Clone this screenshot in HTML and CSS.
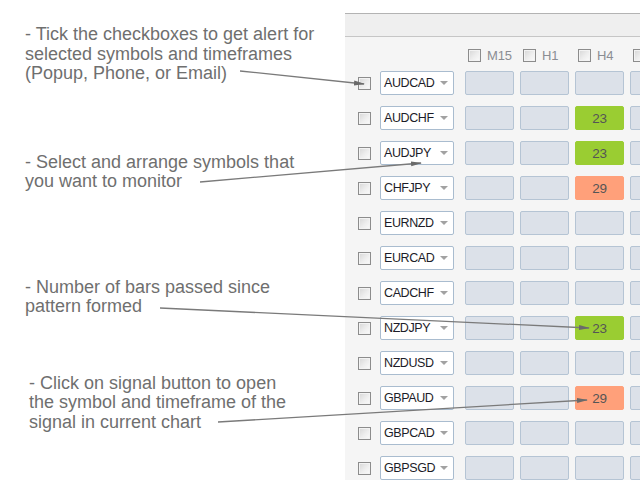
FILE: index.html
```html
<!DOCTYPE html>
<html lang="en">
<head>
<meta charset="utf-8">
<title>Pattern dashboard</title>
<link rel="stylesheet" href="styles.css">
</head>
<body>
<div class="page">
  <aside class="notes">
    <p class="note n1">- Tick the checkboxes to get alert for<br>selected symbols and timeframes<br>(Popup, Phone, or Email)</p>
    <p class="note n2">- Select and arrange symbols that<br>you want to monitor</p>
    <p class="note n3">- Number of bars passed since<br>pattern formed</p>
    <p class="note n4">- Click on signal button to open<br>the symbol and timeframe of the<br>signal in current chart</p>
  </aside>

  <section class="panel">
    <div class="panel-head"></div>
    <div class="panel-body">
      <div class="tf-row">
        <span class="tf"><span class="cb"></span>M15</span>
        <span class="tf"><span class="cb"></span>H1</span>
        <span class="tf"><span class="cb"></span>H4</span>
        <span class="tf"><span class="cb"></span></span>
      </div>

      <div class="row"><span class="cb"></span><span class="sym">AUDCAD<i class="caret"></i></span><span class="cells"><span class="cell"></span><span class="cell"></span><span class="cell"></span><span class="cell"></span></span></div>
      <div class="row"><span class="cb"></span><span class="sym">AUDCHF<i class="caret"></i></span><span class="cells"><span class="cell"></span><span class="cell"></span><span class="cell up">23</span><span class="cell"></span></span></div>
      <div class="row"><span class="cb"></span><span class="sym">AUDJPY<i class="caret"></i></span><span class="cells"><span class="cell"></span><span class="cell"></span><span class="cell up">23</span><span class="cell"></span></span></div>
      <div class="row"><span class="cb"></span><span class="sym">CHFJPY<i class="caret"></i></span><span class="cells"><span class="cell"></span><span class="cell"></span><span class="cell down">29</span><span class="cell"></span></span></div>
      <div class="row"><span class="cb"></span><span class="sym">EURNZD<i class="caret"></i></span><span class="cells"><span class="cell"></span><span class="cell"></span><span class="cell"></span><span class="cell"></span></span></div>
      <div class="row"><span class="cb"></span><span class="sym">EURCAD<i class="caret"></i></span><span class="cells"><span class="cell"></span><span class="cell"></span><span class="cell"></span><span class="cell"></span></span></div>
      <div class="row"><span class="cb"></span><span class="sym">CADCHF<i class="caret"></i></span><span class="cells"><span class="cell"></span><span class="cell"></span><span class="cell"></span><span class="cell"></span></span></div>
      <div class="row"><span class="cb"></span><span class="sym">NZDJPY<i class="caret"></i></span><span class="cells"><span class="cell"></span><span class="cell"></span><span class="cell up">23</span><span class="cell"></span></span></div>
      <div class="row"><span class="cb"></span><span class="sym">NZDUSD<i class="caret"></i></span><span class="cells"><span class="cell"></span><span class="cell"></span><span class="cell"></span><span class="cell"></span></span></div>
      <div class="row"><span class="cb"></span><span class="sym">GBPAUD<i class="caret"></i></span><span class="cells"><span class="cell"></span><span class="cell"></span><span class="cell down">29</span><span class="cell"></span></span></div>
      <div class="row"><span class="cb"></span><span class="sym">GBPCAD<i class="caret"></i></span><span class="cells"><span class="cell"></span><span class="cell"></span><span class="cell"></span><span class="cell"></span></span></div>
      <div class="row"><span class="cb"></span><span class="sym">GBPSGD<i class="caret"></i></span><span class="cells"><span class="cell"></span><span class="cell"></span><span class="cell"></span><span class="cell"></span></span></div>
    </div>
  </section>

  <svg class="arrows" width="640" height="480" viewBox="0 0 640 480" aria-hidden="true">
    <defs>
      <marker id="ah" markerWidth="11" markerHeight="6" refX="10" refY="3" orient="auto" markerUnits="userSpaceOnUse">
        <path d="M0,0.5 L11,3 L0,5.5 Z" fill="#6a6a6a"/>
      </marker>
    </defs>
    <g stroke="#7a7a7a" stroke-width="1.3" fill="none" marker-end="url(#ah)">
      <line x1="240" y1="71" x2="364" y2="84"/>
      <line x1="200" y1="182" x2="421" y2="163"/>
      <line x1="160" y1="308" x2="589" y2="328"/>
      <line x1="218" y1="422" x2="587" y2="400"/>
    </g>
  </svg>
</div>
</body>
</html>
```
FILE: styles.css
```css
* { box-sizing: border-box; }

html, body {
  margin: 0;
  padding: 0;
  background: #ffffff;
}

.page {
  position: relative;
  display: flex;
  width: 640px;
  height: 480px;
  overflow: hidden;
}

/* ---------- left annotations ---------- */
.notes {
  flex: none;
  width: 345px;
  display: flex;
  flex-direction: column;
}

.note {
  margin: 0;
  padding-left: 25px;
  font-family: "Liberation Sans", Arial, sans-serif;
  font-size: 18px;
  line-height: 19.5px;
  color: #6f6f6f;
  white-space: nowrap;
}

.n1 { margin-top: 25px; }
.n2 { margin-top: 69px; }
.n3 { margin-top: 86px; }
.n4 { margin-top: 57px; padding-left: 29px; }

/* ---------- panel ---------- */
.panel {
  flex: 1;
  min-width: 0;
  margin-top: 13px;
  border-top: 1px solid #b3b3b3;
  background: #f5f5f5;
  overflow: hidden;
}

.panel-head {
  height: 23px;
  background: #efefef;
  border-bottom: 1px solid #c6c6c6;
}

.panel-body {
  padding: 12px 0 0 13px;
  font-family: "Liberation Sans", Arial, sans-serif;
  width: 320px;
}

.tf-row {
  display: flex;
  align-items: center;
  height: 13px;
  margin-bottom: 9px;
  padding-left: 107px;
  white-space: nowrap;
}

.tf {
  flex: none;
  display: flex;
  align-items: center;
  width: 55px;
  padding-left: 3px;
  color: #8b8d93;
  font-size: 13px;
  letter-spacing: -0.2px;
}

.tf .cb { margin-right: 6px; }

.cb {
  flex: none;
  display: inline-block;
  width: 13px;
  height: 13px;
  border: 1px solid #8c8c8c;
  background: linear-gradient(135deg, #d6d6d6 0%, #eeeeee 55%, #fbfbfb 100%);
  box-shadow: inset 0 0 0 1px #f3f3f3;
}

.row {
  display: flex;
  align-items: center;
  height: 24px;
  margin-bottom: 11px;
  white-space: nowrap;
}

.row > .cb { margin-right: 9px; }

.sym {
  flex: none;
  display: flex;
  align-items: center;
  justify-content: space-between;
  width: 74px;
  height: 24px;
  margin-right: 11px;
  padding: 0 5px 0 3px;
  background: #ffffff;
  border: 1px solid #a9bccf;
  border-radius: 2px;
  color: #1c1c28;
  font-size: 12.5px;
  letter-spacing: -0.4px;
}

.caret {
  width: 0;
  height: 0;
  border-left: 4px solid transparent;
  border-right: 4px solid transparent;
  border-top: 4px solid #a2a2a2;
}

.cells {
  flex: none;
  display: flex;
  gap: 6px;
}

.cell {
  flex: none;
  display: flex;
  align-items: center;
  justify-content: center;
  width: 49px;
  height: 24px;
  background: #dce1e9;
  border: 1px solid #b5c4d4;
  border-radius: 2px;
  color: #555555;
  font-size: 13.5px;
  letter-spacing: -0.3px;
}

.cell.up {
  background: #9acd32;
  border-color: #9acd32;
}

.cell.down {
  background: #ffa07a;
  border-color: #ffa07a;
}

/* ---------- overlay arrows ---------- */
.arrows {
  position: absolute;
  top: 0;
  left: 0;
  pointer-events: none;
}
```
